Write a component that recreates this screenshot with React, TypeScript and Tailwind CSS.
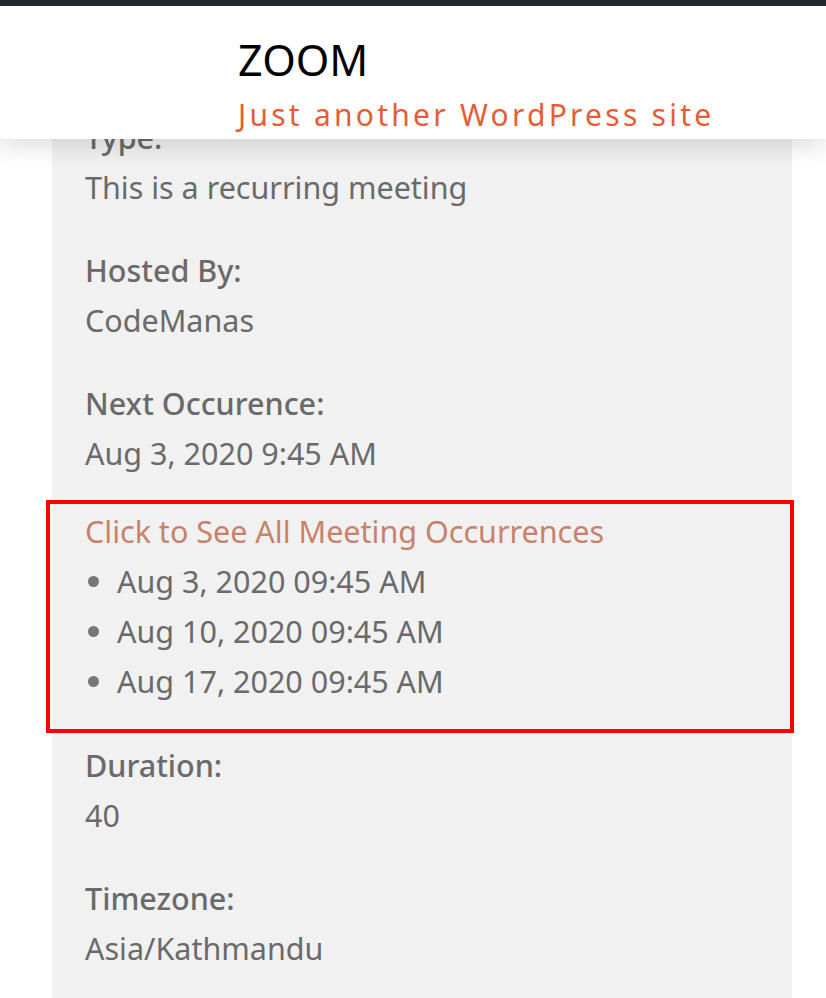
export default function App() {
  const before = [
    { label: "Type:", value: "This is a recurring meeting" },
    { label: "Hosted By:", value: "CodeManas" },
    { label: "Next Occurence:", value: "Aug 3, 2020 9:45 AM" },
  ];
  const after = [
    { label: "Duration:", value: "40" },
    { label: "Timezone:", value: "Asia/Kathmandu" },
  ];
  const occurrences = ["Aug 3, 2020 09:45 AM", "Aug 10, 2020 09:45 AM", "Aug 17, 2020 09:45 AM"];

  return (
    <div className="relative min-h-[998px] w-[826px] overflow-hidden bg-white font-['Noto_Sans',sans-serif]">
      <header className="absolute left-0 top-0 z-10 h-[139px] w-full border-t-[6px] border-[#23282d] bg-white pl-[238px] shadow-[0_8px_22px_rgba(0,0,0,0.13)]">
        <h1 className="pt-[24px] text-[43px] leading-[60px] text-black">ZOOM</h1>
        <p className="text-[30px] leading-[50px] tracking-[3.25px] text-[#e45d35]">Just another WordPress site</p>
      </header>

      <main className="ml-[52px] min-h-[998px] w-[740px] bg-[#f1f1f1] pt-[112px] text-[30.5px] leading-[50px] text-[#6a6a6a]">
        {before.map((row) => (
          <div key={row.label} className="mb-[33px] px-[33px]">
            <p className="font-medium">{row.label}</p>
            <p>{row.value}</p>
          </div>
        ))}

        <div className="-ml-[6px] -mr-[2px] mt-[-11px] mb-[7px] border-4 border-[#ff0000] pb-[23px] pl-[35px] pt-[2px]">
          <a href="#" className="text-[#c8826c]">Click to See All Meeting Occurrences</a>
          <ul className="list-disc pl-[32px] marker:text-[#777]">
            {occurrences.map((o) => (
              <li key={o}>{o}</li>
            ))}
          </ul>
        </div>

        {after.map((row) => (
          <div key={row.label} className="mb-[33px] px-[33px]">
            <p className="font-medium">{row.label}</p>
            <p>{row.value}</p>
          </div>
        ))}
      </main>
    </div>
  );
}
